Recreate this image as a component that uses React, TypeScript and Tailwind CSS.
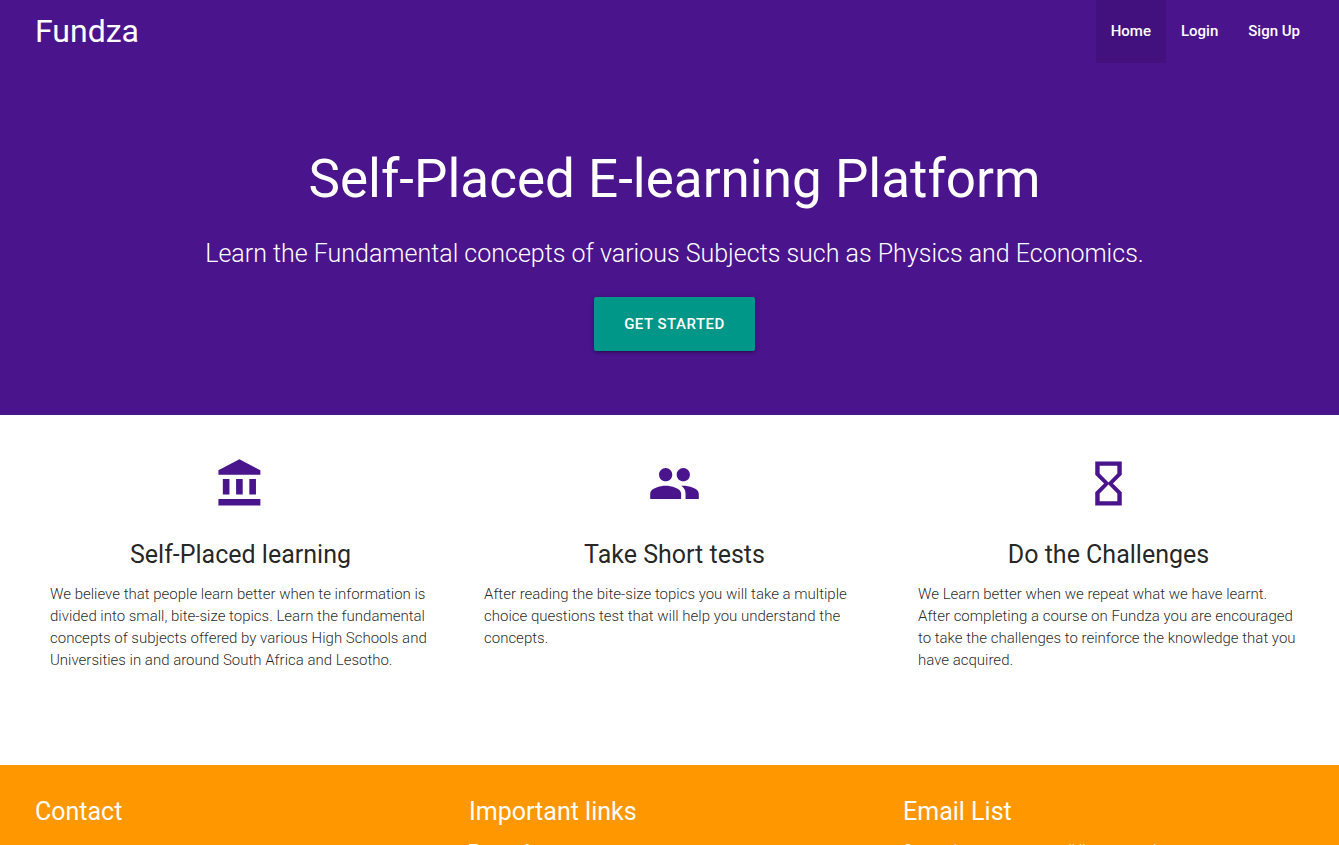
import { MdHourglassEmpty, MdPeople } from "react-icons/md";

function BankIcon({ className }: { className?: string }) {
  return (
    <svg viewBox="0 0 24 24" fill="currentColor" className={className} aria-hidden="true">
      <path d="M4 10v7h3v-7H4zm6 0v7h3v-7h-3zM2 22h19v-3H2v3zm14-12v7h3v-7h-3zm-4.500-9L2 6v2h19V6l-9.500-5z" />
    </svg>
  );
}

const links = [
  { label: "Home", active: true },
  { label: "Login", active: false },
  { label: "Sign Up", active: false },
];

const features = [
  {
    icon: BankIcon,
    title: "Self-Placed learning",
    text: "We believe that people learn better when te information is divided into small, bite-size topics. Learn the fundamental concepts of subjects offered by various High Schools and Universities in and around South Africa and Lesotho.",
  },
  {
    icon: MdPeople,
    title: "Take Short tests",
    text: "After reading the bite-size topics you will take a multiple choice questions test that will help you understand the concepts.",
  },
  {
    icon: MdHourglassEmpty,
    title: "Do the Challenges",
    text: "We Learn better when we repeat what we have learnt. After completing a course on Fundza you are encouraged to take the challenges to reinforce the knowledge that you have acquired.",
  },
];

export default function App() {
  return (
    <div className="h-screen overflow-hidden bg-white font-['Roboto',sans-serif] text-[15px] leading-[22px] text-black/87">
      <header className="bg-[#4a148c] pb-16 text-white">
        <nav className="flex items-start justify-between pr-6 pl-[35px]">
          <a href="#" className="text-[32px] leading-[63px]">Fundza</a>
          <ul className="flex">
            {links.map((link) => (
              <li key={link.label}>
                <a
                  href="#"
                  className={
                    link.active
                      ? "block bg-black/10 px-[15px] font-medium leading-[63px]"
                      : "block px-[15px] font-medium leading-[63px]"
                  }
                >
                  {link.label}
                </a>
              </li>
            ))}
          </ul>
        </nav>
        <div className="flex flex-col items-center pr-[25px] pl-[35px] pt-[84px] text-center">
          <h1 className="text-[53px] leading-[64px]">Self-Placed E-learning Platform</h1>
          <p className="mt-7 text-[25px] font-light leading-[30px]">
            Learn the Fundamental concepts of various Subjects such as Physics and Economics.
          </p>
          <button
            type="button"
            className="mt-7 h-[54px] rounded-[2px] bg-[#009688] px-[30px] font-medium tracking-[0.5px] shadow-[0_2px_2px_0_rgba(0,0,0,0.14),0_3px_1px_-2px_rgba(0,0,0,0.12),0_1px_5px_0_rgba(0,0,0,0.2)]"
          >
            GET STARTED
          </button>
        </div>
      </header>

      <main className="grid min-h-[350px] grid-cols-3 gap-x-[53px] pr-10 pl-[50px] pt-[42px]">
        {features.map(({ icon: Icon, title, text }) => (
          <section key={title}>
            <Icon className="mx-auto size-[53px] text-[#4a148c]" aria-hidden="true" />
            <h2 className="mt-[30px] text-center text-[25px] leading-[30px]">{title}</h2>
            <p className="mt-[13px] font-light">{text}</p>
          </section>
        ))}
      </main>

      <footer className="grid grid-cols-3 gap-x-[22px] bg-[#ff9800] pr-6 pl-[35px] pt-8 pb-8 text-white">
        <section>
          <h2 className="text-[25px] leading-[30px]">Contact</h2>
        </section>
        <section>
          <h2 className="text-[25px] leading-[30px]">Important links</h2>
          <a href="#" className="mt-3 block">Terms of use</a>
        </section>
        <section>
          <h2 className="text-[25px] leading-[30px]">Email List</h2>
          <p className="mt-3 font-light">Come sign up to our email list we send</p>
        </section>
      </footer>
    </div>
  );
}
